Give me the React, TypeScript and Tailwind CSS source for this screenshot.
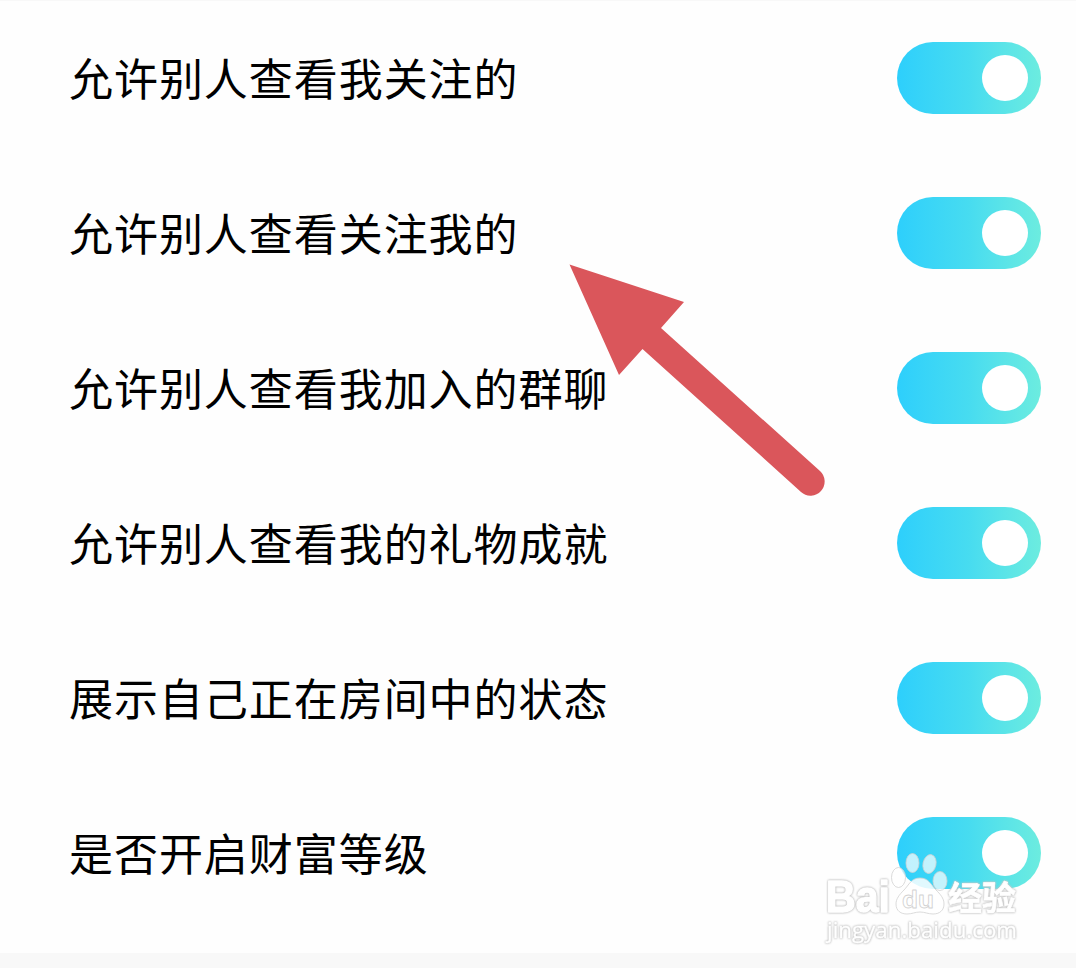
interface PrivacySetting {
  id: string
  label: string
  enabled: boolean
}

const settings: PrivacySetting[] = [
  { id: 'following', label: '允许别人查看我关注的', enabled: true },
  { id: 'followers', label: '允许别人查看关注我的', enabled: true },
  { id: 'groups', label: '允许别人查看我加入的群聊', enabled: true },
  { id: 'gifts', label: '允许别人查看我的礼物成就', enabled: true },
  { id: 'room', label: '展示自己正在房间中的状态', enabled: true },
  { id: 'wealth', label: '是否开启财富等级', enabled: true },
]

function Toggle({ label, enabled }: { label: string; enabled: boolean }) {
  return (
    <button
      role="switch"
      aria-checked={enabled}
      aria-label={label}
      className="flex h-[72px] w-36 shrink-0 items-center justify-end rounded-full bg-linear-to-r from-[#2dcffc] via-[#47dcf0] to-[#6cecdf] pr-[13px]"
    >
      <span className="size-[46px] rounded-full bg-white" />
    </button>
  )
}

function SettingRow({ setting }: { setting: PrivacySetting }) {
  return (
    <li className="flex h-[155px] items-center justify-between pt-px pr-[35px] pl-[69px]">
      <span className="pb-0.5 text-[44px] leading-none tracking-[0.95px] whitespace-nowrap">{setting.label}</span>
      <Toggle label={setting.label} enabled={setting.enabled} />
    </li>
  )
}

function Arrow() {
  return (
    <svg className="pointer-events-none absolute top-[255px] left-[560px]" width="280" height="250" viewBox="560 255 280 250">
      <path
        d="M569.5 264.5 L684 302 L661 328 L820 471 A14 14 0 0 1 801 492 L642.5 349 L619 375 Z"
        fill="#da565b"
      />
    </svg>
  )
}

function Watermark() {
  return (
    <svg
      className="pointer-events-none absolute top-[845px] left-[815px]"
      width="215"
      height="105"
      viewBox="815 845 215 105"
      fill="#fff"
      strokeLinejoin="round"
      fontFamily='"Liberation Sans", "Noto Sans CJK SC", sans-serif'
    >
      <g stroke="#d2d2d2" strokeWidth="0.8">
        <g fillOpacity="0.7">
          <ellipse cx="898.5" cy="877.5" rx="7" ry="10" />
          <ellipse cx="912.5" cy="863" rx="6.5" ry="9.5" />
          <ellipse cx="929.5" cy="864" rx="6.5" ry="9.5" transform="rotate(12 929.5 864)" />
          <ellipse cx="940" cy="881" rx="7" ry="9.5" />
        </g>
        <path
          d="M920 878 C911 878 909 885 904 890 C899 895 896 899 896 904 C896 911 901 914 907 914 C912 914 915 912 920 912 C925 912 928 914 933 914 C940 914 944 910 944 904 C944 898 940 894 936 890 C931 885 929 878 920 878 Z"
          fillOpacity="0.85"
        />
        <text x="902" y="908" fontSize="24" fontWeight="700" textLength="32" lengthAdjust="spacingAndGlyphs">
          du
        </text>
      </g>
      {/* white lettering with a soft grey halo */}
      <g className="[filter:drop-shadow(0_0_0.8px_#b4b4b4)_drop-shadow(0_0_0.5px_#e0e0e0)]" stroke="#fff" strokeWidth="1.5">
        <text x="826" y="912" fontSize="44" fontWeight="700" textLength="64" lengthAdjust="spacingAndGlyphs">
          Bai
        </text>
        <text x="948" y="910" fontSize="33" fontWeight="700" strokeWidth="0.6" textLength="68" lengthAdjust="spacingAndGlyphs">
          经验
        </text>
        <text x="827" y="938" fontSize="22" fontFamily='"Open Sans", "Noto Sans", sans-serif' strokeWidth="0.4" textLength="190" lengthAdjust="spacingAndGlyphs">
          jingyan.baidu.com
        </text>
      </g>
    </svg>
  )
}

export default function App() {
  return (
    <main className="relative flex h-[968px] w-[1076px] flex-col overflow-hidden bg-[#fefefe] font-['Noto_Sans_CJK_SC',sans-serif] text-black shadow-[inset_0_1px_0_#f8f8f8]">
      <ul className="grow">
        {settings.map((setting) => (
          <SettingRow key={setting.id} setting={setting} />
        ))}
      </ul>
      <div className="h-[15px] bg-[#f8f8f8]" />
      <Arrow />
      <Watermark />
    </main>
  )
}
